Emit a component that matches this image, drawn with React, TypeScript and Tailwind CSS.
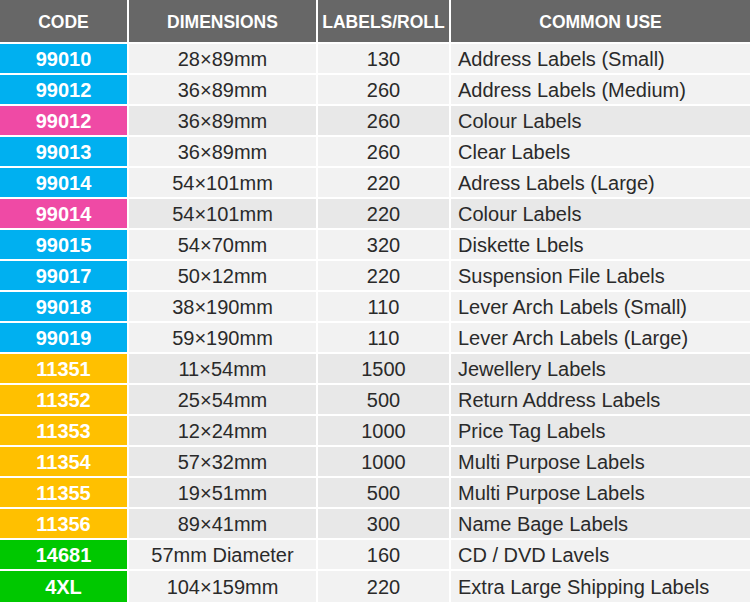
import React from "react";

type Kind = "blue" | "pink" | "orange" | "green";

const codeBg: Record<Kind, string> = {
  blue: "bg-[#00b0f0]",
  pink: "bg-[#ef4aa5]",
  orange: "bg-[#ffc000]",
  green: "bg-[#00c800]",
};

const cellBg: Record<Kind, string> = {
  blue: "bg-[#f2f2f2]",
  pink: "bg-[#e8e8e8]",
  orange: "bg-[#e8e8e8]",
  green: "bg-[#f2f2f2]",
};

const rows: [string, Kind, string, string, string][] = [
  ["99010", "blue", "28×89mm", "130", "Address Labels (Small)"],
  ["99012", "blue", "36×89mm", "260", "Address Labels (Medium)"],
  ["99012", "pink", "36×89mm", "260", "Colour Labels"],
  ["99013", "blue", "36×89mm", "260", "Clear Labels"],
  ["99014", "blue", "54×101mm", "220", "Adress Labels (Large)"],
  ["99014", "pink", "54×101mm", "220", "Colour Labels"],
  ["99015", "blue", "54×70mm", "320", "Diskette Lbels"],
  ["99017", "blue", "50×12mm", "220", "Suspension File Labels"],
  ["99018", "blue", "38×190mm", "110", "Lever Arch Labels (Small)"],
  ["99019", "blue", "59×190mm", "110", "Lever Arch Labels (Large)"],
  ["11351", "orange", "11×54mm", "1500", "Jewellery Labels"],
  ["11352", "orange", "25×54mm", "500", "Return Address Labels"],
  ["11353", "orange", "12×24mm", "1000", "Price Tag Labels"],
  ["11354", "orange", "57×32mm", "1000", "Multi Purpose Labels"],
  ["11355", "orange", "19×51mm", "500", "Multi Purpose Labels"],
  ["11356", "orange", "89×41mm", "300", "Name Bage Labels"],
  ["14681", "green", "57mm Diameter", "160", "CD / DVD Lavels"],
  ["4XL", "green", "104×159mm", "220", "Extra Large Shipping Labels"],
];

const headers = ["CODE", "DIMENSIONS", "LABELS/ROLL", "COMMON USE"];

export default function App() {
  return (
    <div
      className="w-[750px] h-[602px] bg-white overflow-hidden"
      style={{ fontFamily: '"Liberation Sans", Arial, sans-serif' }}
    >
      <div className="grid grid-cols-[127px_187px_131px_299px] grid-rows-[42px_repeat(17,29px)_31px] gap-[2px]">
        {headers.map((h) => (
          <div
            key={h}
            className="bg-[#676767] text-white font-bold text-[17.5px] flex items-center justify-center leading-none pt-[3px]"
          >
            {h}
          </div>
        ))}
        {rows.map(([code, kind, dim, qty, use], i) => (
          <React.Fragment key={i}>
            <div
              className={`${codeBg[kind]} text-white font-bold text-[20px] flex items-center justify-center leading-none`}
            >
              {code}
            </div>
            <div
              className={`${cellBg[kind]} text-[#2a2a2a] text-[20px] flex items-center justify-center leading-none`}
            >
              {dim}
            </div>
            <div
              className={`${cellBg[kind]} text-[#2a2a2a] text-[20px] flex items-center justify-center leading-none`}
            >
              {qty}
            </div>
            <div
              className={`${cellBg[kind]} text-[#2a2a2a] text-[20px] flex items-center pl-[7px] leading-none`}
            >
              {use}
            </div>
          </React.Fragment>
        ))}
      </div>
    </div>
  );
}
